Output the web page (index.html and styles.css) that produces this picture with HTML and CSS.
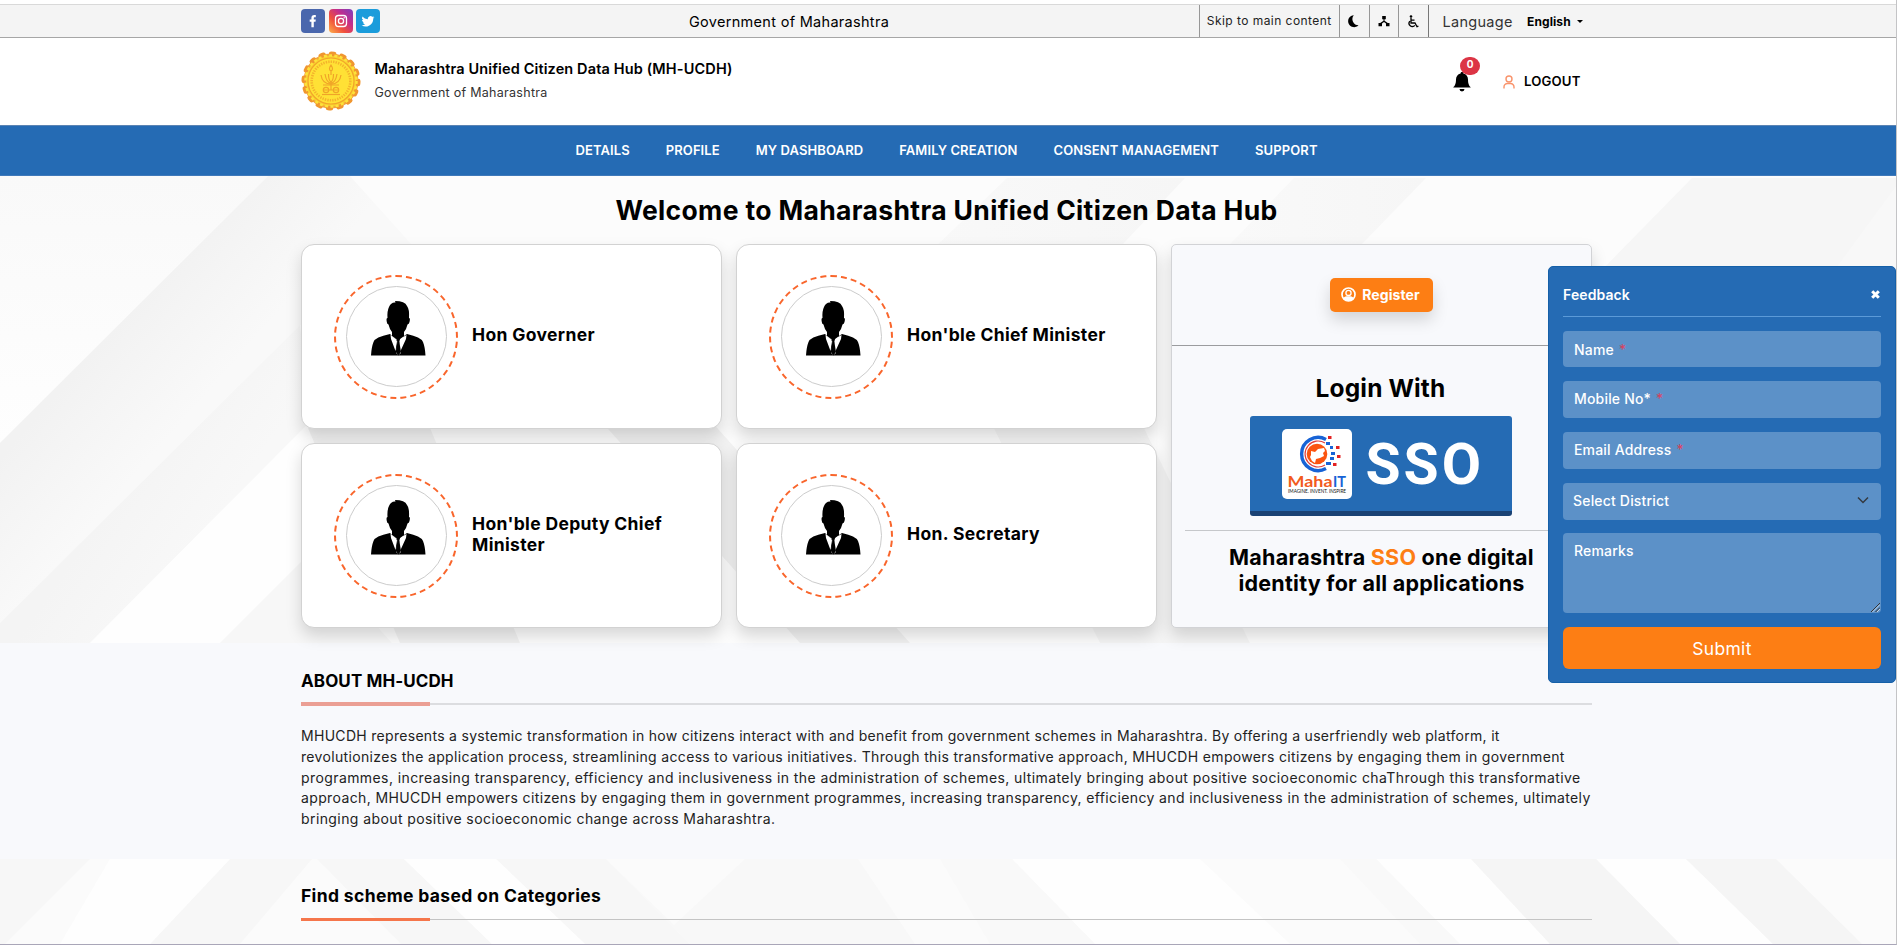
FILE: index.html
```html
<!DOCTYPE html>
<html lang="en">
<head>
<meta charset="utf-8">
<title>Maharashtra Unified Citizen Data Hub</title>
<link rel="stylesheet" href="styles.css">
</head>
<body>
<svg class="defs" aria-hidden="true">
  <symbol id="person" viewBox="0 0 55 55">
    <path d="M18 6 Q20 1 24.500 1.500 L24 0 Q34 0 36 5 Q38.500 8 38 17 Q39.500 17 38.500 21 Q38 23 36.500 23.500 Q35.500 28 33 31 V35 L36 33 Q50 36 52 41 Q54 46 54.500 54.500 H0 Q.5 46 2.500 41 Q4 36 19 33 L21 35 V31 Q18.500 28 17.500 23.500 Q16 23 15.800 21 Q15 17 16.500 17 Q16 10 18 6Z"/>
    <path class="shirt" d="M19.500 34 L20 38 L24.500 50 L26 40.500 L24.800 37.500 Z M35.500 34 L35 38 L29.500 50 L28.500 40.500 L29.600 37.500 Z M21 35 L26 38.500 H28.600 L33 35 L29 39 L28.300 41 L30 52 L27.500 54 L25 52 L26.700 41 L26 39Z"/>
    <path d="M25.600 38 H29 L28.300 40.700 L30 51 L27.400 54.500 L24.800 51 L26.400 40.700Z"/>
  </symbol>
</svg>

<div class="page">
<header class="topbar">
  <div class="container topbar-row">
    <div class="social">
      <svg width="24" height="24" viewBox="0 0 24 24"><rect width="24" height="24" rx="4" fill="#4a67ad"/><path fill="#fff" d="M10.400 18.200V12.700H8.700V10.400h1.700V8.900c0-2 1-3 2.900-3h1.500v2.300h-1c-.8 0-1 .3-1 1v1.200h2l-.3 2.300h-1.700v5.500z"/></svg>
      <svg width="24" height="24" viewBox="0 0 24 24"><defs><linearGradient id="ig" x1="0" y1="1" x2="1" y2="0"><stop offset="0" stop-color="#fdb04a"/><stop offset=".35" stop-color="#f0503c"/><stop offset=".65" stop-color="#c22d8c"/><stop offset="1" stop-color="#7a3fc0"/></linearGradient></defs><rect width="24" height="24" rx="4" fill="url(#ig)"/><rect x="6.500" y="6.500" width="11" height="11" rx="3" fill="none" stroke="#fff" stroke-width="1.300"/><circle cx="12" cy="12" r="2.600" fill="none" stroke="#fff" stroke-width="1.300"/><circle cx="15.200" cy="8.800" r=".7" fill="#fff"/></svg>
      <svg width="24" height="24" viewBox="0 0 24 24"><rect width="24" height="24" rx="4" fill="#1b9cdb"/><path fill="#fff" transform="translate(5.600 5.600) scale(.54)" d="M23.600 4.900c-.9.400-1.800.7-2.800.8 1-.6 1.800-1.600 2.100-2.700-.9.600-2 1-3.100 1.200A4.900 4.900 0 0 0 11.500 8.600 13.800 13.800 0 0 1 1.500 3.500a4.900 4.900 0 0 0 1.500 6.500c-.8 0-1.600-.2-2.200-.6v.1c0 2.400 1.700 4.400 3.900 4.800-.7.200-1.500.2-2.200.1.600 1.900 2.400 3.300 4.600 3.400A9.900 9.900 0 0 1 0 19.800 13.900 13.900 0 0 0 7.500 22c9.100 0 14-7.500 14-14v-.6c.9-.7 1.700-1.500 2.100-2.500z"/></svg>
    </div>
    <div class="gov">Government of Maharashtra</div>
    <div class="tools">
      <a class="tool skip">Skip to main content</a>
      <a class="tool"><svg width="14" height="14" viewBox="0 0 14 14"><path d="M6.800 1.200A6 6 0 1 0 11.500 11.300 6.200 6.200 0 0 1 6.800 1.200z"/></svg></a>
      <a class="tool"><svg width="12" height="12" viewBox="0 0 12 12"><path d="M4.200 1h3.600v3.300H6.500v1.400l3.300 2.300h1.700v3.200H8V8.400L6 6.900 4 8.400v2.800H.5V8h1.700l3.300-2.300V4.300H4.200z"/></svg></a>
      <a class="tool"><svg width="12" height="13" viewBox="0 0 12 13"><circle cx="4" cy="1.500" r="1.300"/><path fill="none" stroke="#000" stroke-width="1.300" d="M4 3v5h4l2 3.700 1.400-.6M4.200 5.200H7.500M2.900 6.200a3.200 3.200 0 1 0 4.900 4.200"/></svg></a>
      <div class="lang"><span class="lang-label">Language</span><span class="lang-value">English</span><i class="caret"></i></div>
    </div>
  </div>
</header>

<div class="brandbar">
  <div class="container brand-row">
    <svg class="seal" width="60" height="60" viewBox="0 0 60 60">
      <circle cx="30" cy="30" r="26.500" fill="#f9cf2e" stroke="#f2a33c" stroke-width="2"/>
      <circle cx="30" cy="30" r="27.200" fill="none" stroke="#f0962f" stroke-width="4.600" stroke-linecap="round" stroke-dasharray="3 7.680"/>
      <circle cx="30" cy="30" r="25.500" fill="none" stroke="#fde23a" stroke-width="2.500" stroke-dasharray="3 2.340"/>
      <circle cx="30" cy="30" r="23" fill="#ffe135" stroke="#f2a52a" stroke-width="1.200"/>
      <circle cx="30" cy="30" r="19.300" fill="none" stroke="#f4b32c" stroke-width="2.600" stroke-dasharray="1.400 1.100"/>
      <g fill="none" stroke="#f0a428" stroke-width="1.200"><path d="M30 14c-2 3-2 5 0 6 2-1 2-3 0-6zM30 20v4M20 24c1 7 5 9 10 9s9-2 10-9M24 23c1 6 3 9 6 9s5-3 6-9M27.500 23c0 4 1 7 2.500 8 1.500-1 2.500-4 2.500-8M22 34h16M30 34v5M23 39h14"/><circle cx="25" cy="39" r="2.700"/><circle cx="35" cy="39" r="2.700"/><path d="M21 43.500h18"/></g>
    </svg>
    <div class="brand">
      <div class="brand-title">Maharashtra Unified Citizen Data Hub (MH-UCDH)</div>
      <div class="brand-sub">Government of Maharashtra</div>
    </div>
    <div class="account">
      <div class="bell">
        <svg width="18" height="20" viewBox="0 0 18 20"><path d="M9 0c.9 0 1.400.6 1.400 1.400C13.400 2 15 4.500 15 7.500c0 4.500 1.200 6.300 2.800 8H.2C1.800 13.800 3 12 3 7.500 3 4.500 4.600 2 7.600 1.400 7.600.6 8.100 0 9 0zM6.500 17h5a2.500 2.500 0 0 1-5 0z"/></svg>
        <span class="badge">0</span>
      </div>
      <svg class="user" width="12" height="14" viewBox="0 0 12 14"><circle cx="6" cy="4" r="3" /><path d="M1 13.500V12a3.500 3.500 0 0 1 3.500-3.500h3A3.500 3.500 0 0 1 11 12v1.500"/></svg>
      <span class="logout">LOGOUT</span>
    </div>
  </div>
</div>

<nav class="nav"><a>DETAILS</a><a>PROFILE</a><a>MY DASHBOARD</a><a>FAMILY CREATION</a><a>CONSENT MANAGEMENT</a><a>SUPPORT</a></nav>

<section class="hero">
  <svg class="stripes" width="1897" height="467" viewBox="0 176 1897 467" preserveAspectRatio="none">
    <defs>
      <linearGradient id="g1" gradientUnits="userSpaceOnUse" x1="130" y1="310" x2="215" y2="385"><stop offset="0" stop-color="#f2f2f2"/><stop offset="1" stop-color="#f9f9f9"/></linearGradient>
      <linearGradient id="g2" gradientUnits="userSpaceOnUse" x1="120" y1="490" x2="200" y2="545"><stop offset="0" stop-color="#f4f4f4"/><stop offset="1" stop-color="#f8f8f8"/></linearGradient>
      <linearGradient id="g3" x1="0" y1="0" x2="0" y2="1"><stop offset="0" stop-color="#f9f9f9"/><stop offset="1" stop-color="#fefefe"/></linearGradient>
      <linearGradient id="g4" x1="1" y1="0" x2="0" y2="0"><stop offset="0" stop-color="#f6f6f6"/><stop offset="1" stop-color="#f9f9f9"/></linearGradient>
    </defs>
    <rect y="176" width="1897" height="467" fill="#fcfcfc"/>
    <path fill="url(#g3)" d="M0 176H268L0 443z"/>
    <path fill="url(#g1)" d="M268 176H350L430 265 300 325 0 623V443z"/>
    <path fill="url(#g2)" d="M300 325L0 623V643H90L310 422z"/>
    <path fill="#fefefe" d="M310 422L90 643H220L310 553z"/>
    <path fill="#f7f7f7" d="M310 553L220 643H392L310 553z"/>
    <path fill="#f1f1f1" d="M308 428H430L520 643H400z M600 420h110l200 223h-110z"/>
    <path fill="url(#g4)" d="M1007 178H1185L1123 244 1090 300H880z"/>
    <path fill="url(#g4)" d="M1294 178H1426L1362 244H1230z"/>
    <path fill="#f6f6f6" d="M1692 178H1897V643H1592V280z"/>
    <path fill="#f8f8f8" d="M1897 185V290H1820z"/>
    <path fill="#f5f5f5" d="M980 400h150l120 243h-150z"/>
  </svg>
  <div class="container hero-body">
    <h1>Welcome to Maharashtra Unified Citizen Data Hub</h1>
    <div class="hero-grid">
      <article class="card"><div class="ring"><div class="photo"><svg width="55" height="55"><use href="#person"/></svg></div></div><h2>Hon Governer</h2></article>
      <article class="card"><div class="ring"><div class="photo"><svg width="55" height="55"><use href="#person"/></svg></div></div><h2>Hon'ble Chief Minister</h2></article>
      <aside class="login">
        <div class="register-row"><button class="register"><svg width="15" height="15" viewBox="0 0 15 15"><circle cx="7.500" cy="7.500" r="6.500" fill="none" stroke="#fff" stroke-width="1.700"/><circle cx="7.500" cy="5.900" r="2.600" fill="none" stroke="#fff" stroke-width="1.300"/><path fill="#fff" d="M2 11C3.500 9.700 5 9.300 7.500 9.300s4 .4 5.500 1.700A6.500 6.500 0 0 1 7.500 14 6.500 6.500 0 0 1 2 11z"/></svg>Register</button></div>
        <div class="sso-row">
          <h3>Login With</h3>
          <div class="sso">
            <svg width="70" height="70" viewBox="0 0 70 70">
              <rect width="70" height="70" rx="5" fill="#fff"/>
              <path d="M44 10.500A16.500 16.500 0 1 0 44 39.500" fill="none" stroke="#1763d6" stroke-width="3.400"/>
              <path d="M43 14A13 13 0 1 0 43 36" fill="none" stroke="#e2403c" stroke-width="1.200"/>
              <circle cx="35" cy="25" r="10.300" fill="#fb5410"/>
              <path fill="#fff" d="M29 22l4 1 3-3 6-1 1 3-2 2 1 3-4 2-4 1-1 4-3-2-2-4 1-2z"/>
              <g fill="#1763d6"><rect x="44" y="13" width="4" height="3"/><rect x="48" y="17" width="3" height="3"/><rect x="49" y="23" width="4" height="3"/><rect x="48" y="28" width="4" height="3"/><rect x="44" y="33" width="5" height="3"/></g>
              <g fill="#e32222"><rect x="46" y="7" width="3.500" height="3"/><rect x="54" y="17" width="3.500" height="3"/><rect x="55" y="26" width="3.500" height="3"/><rect x="51" y="34" width="3.500" height="3"/></g>
              <text class="maha" x="5.500" y="57.500" textLength="45" lengthAdjust="spacingAndGlyphs">Maha</text><text class="maha it" x="51" y="57.500" textLength="13" lengthAdjust="spacingAndGlyphs">IT</text>
              <text class="motto" x="6" y="64" textLength="58" lengthAdjust="spacingAndGlyphs">IMAGINE. INVENT. INSPIRE</text>
            </svg>
            <span>SSO</span>
          </div>
        </div>
        <p class="tagline">Maharashtra <em>SSO</em> one digital<br>identity for all applications</p>
      </aside>
      <article class="card"><div class="ring"><div class="photo"><svg width="55" height="55"><use href="#person"/></svg></div></div><h2>Hon'ble Deputy Chief<br>Minister</h2></article>
      <article class="card"><div class="ring"><div class="photo"><svg width="55" height="55"><use href="#person"/></svg></div></div><h2>Hon. Secretary</h2></article>
    </div>
  </div>
</section>

<section class="about">
  <div class="container">
    <h2 class="section-title">ABOUT MH-UCDH</h2>
    <div class="rule"><i></i></div>
    <p><span class="tight">MHUCDH represents a systemic transformation in how citizens interact with and benefit from government schemes in Maharashtra. By offering a userfriendly web platform, it</span><br><span class="snug">revolutionizes the application process, streamlining access to various initiatives. Through this transformative approach, MHUCDH empowers citizens by engaging them in government</span><br><span class="loose">programmes, increasing transparency, efficiency and inclusiveness in the administration of schemes, ultimately bringing about positive socioeconomic chaThrough this transformative</span><br>approach, MHUCDH empowers citizens by engaging them in government programmes, increasing transparency, efficiency and inclusiveness in the administration of schemes, ultimately<br><span class="loose">bringing about positive socioeconomic change across Maharashtra.</span></p>
  </div>
</section>

<section class="find">
  <svg class="stripes" width="1897" height="85" viewBox="0 859 1897 85" preserveAspectRatio="none">
    <rect y="859" width="1897" height="85" fill="#fbfbfb"/>
    <path fill="#f7f7f7" d="M317 859H404L492 944H401z M496 859H606L690 944H585z M0 859H90L5 944H0z M230 859H312L240 944H150z"/>
    <path fill="#fefefe" d="M404 859H496L585 944H492z M110 859H230L150 944H60z M1012 859H1200L1290 944H1095z M1376 859H1471L1550 944H1460z M1596 859H1686L1773 944H1680z"/>
    <path fill="#f8f8f8" d="M606 859L674 925 745 859H858L915 944H690z"/>
    <path fill="#f5f5f5" d="M1471 859H1596L1680 944H1550z M1686 859H1776L1862 944H1773z"/>
    <path fill="#f9f9f9" d="M940 859H1012L1095 944H990z M1340 859H1376L1460 944H1420z"/>
  </svg>
  <div class="container find-body">
    <h2 class="section-title">Find scheme based on Categories</h2>
    <div class="rule strong"><i></i></div>
  </div>
</section>
</div>

<form class="feedback">
  <div class="feedback-head"><span>Feedback</span><svg width="9" height="9" viewBox="0 0 9 9"><path d="M1.200 1.200l6.600 6.600M7.800 1.200L1.200 7.800" stroke="#fff" stroke-width="3"/></svg></div>
  <label class="field first">Name <b>*</b></label>
  <label class="field">Mobile No* <b>*</b></label>
  <label class="field">Email Address <b>*</b></label>
  <label class="field select">Select District<svg width="12" height="8" viewBox="0 0 12 8"><path d="M1 1.500l5 5 5-5" fill="none" stroke="#343a40" stroke-width="1.500"/></svg></label>
  <label class="field remarks">Remarks<svg class="grip" width="9" height="9" viewBox="0 0 9 9"><path d="M0 9L9 0M4.500 9L9 4.500" stroke="#333" stroke-width="1"/><path d="M1.500 9L9 1.500M6 9L9 6" stroke="#dde6f0" stroke-width=".8"/></svg></label>
  <button class="submit" type="button">Submit</button>
</form>
</body>
</html>
```
FILE: styles.css
```css
*{box-sizing:border-box}
body{margin:0;width:1897px;height:945px;overflow:hidden;position:relative;background:#fff;color:#000;font-family:Inter,"Open Sans",sans-serif;font-size:14px;white-space:nowrap}
h1,h2,h3,p{margin:0}
button{font-family:inherit;border:0;color:#fff}
.defs{position:absolute;width:0;height:0}
.shirt{fill:#fff}
.page{height:945px;padding-top:4px;border-right:1px solid #c4c4c6;border-bottom:1px solid #a9a6b8;overflow:hidden}
.container{width:1291px;margin-left:301px}

.topbar{height:34px;background:#f4f4f4;border-top:1px solid #d9d9d9;border-bottom:1px solid #a6a6a6}
.topbar-row{display:flex;align-items:center;height:32px}
.social{display:flex;gap:3.500px;width:388px}
.gov{font-size:14.500px;letter-spacing:.3px}
.tools{display:flex;height:100%;margin-left:auto;width:393.500px}
.tool{display:flex;align-items:center;justify-content:center;width:29.500px;border-left:1px solid #979797}
.tool.skip{width:140.500px;font-size:12px;letter-spacing:.45px;color:#222;padding-bottom:1px}
.lang{display:flex;align-items:center;border-left:1px solid #777;padding-left:14px}
.lang-label{font-size:14.500px;letter-spacing:.3px;color:#333;width:84.500px}
.lang-value{font-size:12px;font-weight:700;letter-spacing:.1px;width:50px}
.caret{border:3px solid transparent;border-top-color:#000;border-bottom:0}

.brandbar{height:87px}
.brand-row{display:flex;align-items:center;height:87px}
.seal{margin-bottom:1px}
.brand{margin-left:13.500px;padding-bottom:1px}
.brand-title{font-size:14.500px;font-weight:600;letter-spacing:.13px;line-height:24px}
.brand-sub{font-size:12.500px;letter-spacing:.28px;line-height:24px;color:#333}
.account{display:flex;align-items:center;margin-left:auto;width:139px}
.bell{position:relative;display:flex;width:50px}
.badge{position:absolute;left:7px;top:-15px;width:20px;height:18px;border-radius:9px;background:#dc3545;color:#fff;font-size:10px;font-weight:700;line-height:15px;text-align:center}
.user{fill:none;stroke:#f9936b;stroke-width:1.400}
.logout{font-size:13.200px;font-weight:600;letter-spacing:.15px;margin-left:9px;padding-bottom:1px}

.nav{display:flex;justify-content:center;align-items:center;gap:36px;height:51px;padding:0 3px 2px 0;background:#256bb4;border-top:1px solid #5b84b3;border-bottom:1px solid #3f79ba;color:#fff;font-size:13px;font-weight:600;letter-spacing:.1px}

.hero{position:relative;height:467px}
.stripes{position:absolute;left:0;top:0}
.hero-body{position:relative;padding-top:18px}
h1{font-size:26.500px;font-weight:650;letter-spacing:.35px;line-height:32px;text-align:center}
.hero-grid{display:grid;grid-template-columns:repeat(3,421px);grid-template-rows:185px 185px;gap:14px;margin-top:18px}
.card{display:flex;align-items:center;padding:0 0 0 32px;background:#fff;border:1px solid #d2d2d2;border-radius:13px;box-shadow:0 8px 16px rgba(0,0,0,.15)}
.ring{display:flex;align-items:center;justify-content:center;width:124px;height:124px;border:2px dashed #f9652b;border-radius:50%}
.photo{width:101px;height:101px;border:1px solid #ccc;border-radius:50%;padding:14px 0 0 24px}
.card h2{margin:0 0 4px 14px;font-size:17.500px;font-weight:650;letter-spacing:.35px;line-height:21px}
.login{grid-column:3;grid-row:1/3;background:#f8f9fc;border:1px solid #d2d3d6;border-radius:5px;box-shadow:0 8px 16px rgba(0,0,0,.15)}
.register-row{height:101px;padding-top:33px;border-bottom:1px solid #9b9c9f;text-align:center}
.register{display:inline-flex;align-items:center;justify-content:center;gap:6px;width:103px;height:34px;padding:0 2px 2px 0;border-radius:5px;background:#fd7e14;box-shadow:0 8px 16px rgba(0,0,0,.15);font-size:14px;font-weight:700;letter-spacing:.1px}
.sso-row{height:185px;margin:0 15px 0 13px;border-bottom:1px solid #c6c8cb;display:flex;flex-direction:column;align-items:center}
h3{margin-top:25px;font-size:24.500px;font-weight:650;letter-spacing:.15px;line-height:34px}
.sso{display:flex;align-items:center;width:262px;height:100px;margin-top:11px;padding-left:32px;background:#256bb4;border-bottom:5px solid #1a4274;border-radius:3px}
.sso span{margin:2px 0 0 14px;color:#fff;font-family:Roboto,sans-serif;font-size:57px;font-weight:700;letter-spacing:3px;line-height:60px}
.maha{font-family:Lato,sans-serif;font-size:16px;font-weight:700;fill:#f25a1c}
.it{fill:#1763d6}
.motto{font-family:Lato,sans-serif;font-size:5px;fill:#111}
.tagline{margin-top:14px;text-align:center;font-size:21.500px;font-weight:650;letter-spacing:.25px;line-height:25.500px}
.tagline em{font-style:normal;color:#fd7e14}

.about{height:216px;background:#f8f9fc;padding-top:25px}
.section-title{font-size:17.500px;font-weight:650;letter-spacing:.35px;line-height:26px}
.about .section-title{font-size:17px;letter-spacing:.1px}
.rule{display:flex;align-items:center;height:4px;margin-top:8px;background:linear-gradient(#dcdde0,#dcdde0) 0 50%/100% 2px no-repeat}
.rule i{width:129px;height:4px;background:#eb9f94}
.rule.strong{margin-top:9px;background:linear-gradient(#c4c4c4,#c4c4c4) 0 50%/100% 1px no-repeat;height:3px}
.rule.strong i{height:3px;background:#f5764b}
.about p{margin-top:20px;line-height:20.800px;letter-spacing:.37px;color:#222}
.tight{letter-spacing:.3px}
.snug{letter-spacing:.335px}
.loose{letter-spacing:.41px}
.find{position:relative;height:85px}
.find-body{position:relative;padding-top:24px}

.feedback{position:absolute;left:1548px;top:266px;width:348px;height:417px;padding:0 14px;background:#256bb4;border:1px solid #1560a8;border-radius:5px;color:#fff;font-size:14px}
.feedback-head{display:flex;justify-content:space-between;align-items:center;height:50px;padding:5px 1px 0 0;border-bottom:1px solid #5b9ad8;font-size:14px;font-weight:600;letter-spacing:.1px}
.field{display:flex;align-items:center;height:37px;margin-top:14px;padding:0 0 2px 11px;border-radius:4px;background:#5c91c8;font-size:14px;font-weight:500;letter-spacing:.18px}
.field b{margin-left:5px;color:#dc3f5c;font-weight:400}
.field.first{height:36px;padding-bottom:0}
.select{justify-content:space-between;padding:0 12px 3px 10px}
.remarks{position:relative;height:80px;margin-top:13px;align-items:flex-start;padding-top:9px}
.grip{position:absolute;right:1px;bottom:1px}
.submit{display:block;width:100%;height:42px;margin-top:14px;border-radius:6px;background:#fd7e14;font-size:17.500px;letter-spacing:.3px}
```
